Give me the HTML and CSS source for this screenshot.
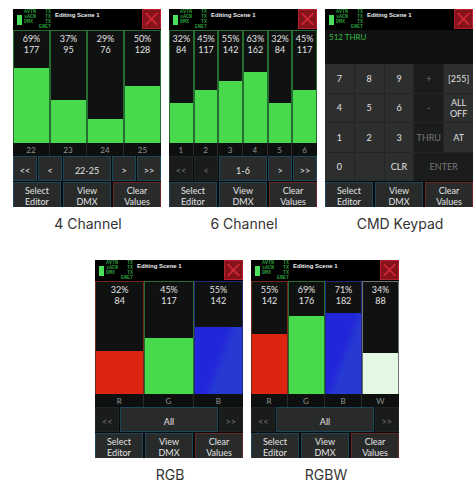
FILE: index.html
```
<!DOCTYPE html>
<html lang="en">
<head>
<meta charset="utf-8">
<title>Scene editors</title>
<link rel="stylesheet" href="styles.css">
</head>
<body>
<main class="gallery">
  <div class="row" id="row-one"></div>
  <div class="row row-offset" id="row-two"></div>
</main>
<template id="screen-header">
  <header class="top">
    <span class="battery"></span>
    <span class="status"><span>AVTN</span><span>TX</span><span>sACN</span><span>TX</span><span>DMX</span><span>TX</span><span class="enet">ENET</span></span>
    <span class="title">Editing Scene 1</span>
    <button class="close" aria-label="Close"><svg viewBox="0 0 19 19"><path d="M3 3L16 16M16 3L3 16"/></svg></button>
  </header>
</template>
<template id="screen-actions">
  <div class="actions">
    <button>Select<br>Editor</button>
    <button>View<br>DMX</button>
    <button class="clear">Clear<br>Values</button>
  </div>
</template>
<template id="keypad">
  <output class="command">512 THRU</output>
  <div class="keys">
    <button>7</button><button>8</button><button>9</button><button class="off">+</button><button>[255]</button>
    <button>4</button><button>5</button><button>6</button><button class="off">-</button><button>ALL<br>OFF</button>
    <button>1</button><button>2</button><button>3</button><button class="off">THRU</button><button>AT</button>
    <button>0</button><span class="blank"></span><button>CLR</button><button class="off enter">ENTER</button>
  </div>
</template>
<script src="app.js"></script>
</body>
</html>
```
FILE: styles.css
```
* { box-sizing: border-box; }
body {
  margin: 0;
  background: #fff;
  font-family: Lato, "Open Sans", sans-serif;
}
button {
  margin: 0;
  padding: 0;
  border: 0;
  border-radius: 0;
  font: inherit;
  color: inherit;
  background: none;
}
.gallery {
  display: flex;
  flex-direction: column;
  gap: 27px;
  padding: 9px 1px 0 13px;
}
.row { display: flex; gap: 8px; }
.row-offset { justify-content: center; padding-left: 8px; }
.figure {
  flex: 0 0 auto;
  width: calc((100vw - 30px) / 3);
  margin: 0;
}
.caption {
  margin-top: 8px;
  padding-left: 2px;
  font: 14px/18px Inter, sans-serif;
  color: #333;
  text-align: center;
}
.screen {
  display: flex;
  flex-direction: column;
  height: 198px;
  background: #080a0a;
  color: #e2e2e2;
  font-size: 9px;
  line-height: 11px;
}
.top {
  display: flex;
  gap: 2px;
  height: 21px;
  padding-left: 4px;
  background: #000;
}
.battery {
  width: 5px;
  height: 10px;
  margin-top: 6px;
  background: #4be05c;
}
.status {
  display: grid;
  grid-template-columns: 1fr auto;
  align-content: start;
  width: 27px;
  padding-top: 1px;
  font: bold 5px/5px "Liberation Mono", monospace;
  color: #2b9a3b;
}
.enet { grid-column: 1 / 3; text-align: right; }
.title {
  flex: 1;
  padding-left: 2px;
  font: bold 6px/12px "Liberation Sans", sans-serif;
  white-space: nowrap;
  color: #eee;
}
.close {
  width: 19px;
  height: 20px;
  border: 1px solid #b5202c;
  background: #86121b;
}
.close svg { display: block; width: 100%; height: 100%; }
.close path { stroke: #d02735; stroke-width: 2; fill: none; }

.channels {
  flex: 1;
  display: grid;
  grid-auto-flow: column;
  grid-auto-columns: 1fr;
}
.channel { display: flex; flex-direction: column; }
.meter {
  flex: 1;
  position: relative;
  display: flex;
  flex-direction: column;
  justify-content: flex-end;
  border: 1px solid #256e2f;
  border-bottom: 0;
  background: #101111;
}
.meter.red { border-color: #7b261b; }
.meter.blue { border-color: #22297f; }
.meter.white { border-color: #6f7477; }
.level { background: #48da4c; }
.red .level { background: #dc2412; }
.blue .level { background: linear-gradient(110deg, #2226da 45%, #263ad2 60%); }
.white .level { background: #e2f8e3; }
.reading {
  position: absolute;
  top: 2px;
  left: 0;
  right: 0;
  text-align: center;
}
.name {
  height: 13px;
  border-right: 1px solid #292b2b;
  font-size: 8px;
  line-height: 15px;
  text-align: center;
  color: #929494;
  background: #0e0f0f;
}
.channel:last-child .name { border-right: 0; }

.nav { display: grid; height: 25px; gap: 1px; }
.nav-pages { grid-template-columns: 1fr 1fr 2fr 1fr 1fr; }
.nav-all { grid-template-columns: 1fr 4fr 1fr; }
.nav button {
  border: 1px solid #1e465a;
  background: #292b2b;
  padding-top: 3px;
}
.nav button:disabled {
  border-color: #202424;
  background: #1a1b1b;
  color: #777;
}
.actions {
  display: grid;
  grid-template-columns: repeat(3, 1fr);
  gap: 2px;
  height: 26px;
  padding-top: 1px;
}
.actions button {
  overflow: hidden;
  border: 1px solid #1e465a;
  border-bottom: 0;
  background: #292b2b;
  padding-top: 2px;
}
.actions .clear { border-color: #6b2429; }

.command {
  height: 34px;
  padding: 2px 4px;
  background: #101111;
  color: #38bd48;
  font-size: 8px;
}
.keys {
  flex: 1;
  display: grid;
  grid-template-columns: repeat(5, 1fr);
  grid-template-rows: repeat(4, 1fr);
  gap: 1px;
  background: #232424;
}
.keys button, .blank { background: #2d2e2e; }
.keys .off { background: #1b1c1c; color: #777; }
.keys .enter { grid-column: span 2; }
```
FILE: app.js
```
const screens = [
  { row: "row-one", caption: "4 Channel", nav: ["<<", "<", "22-25", ">", ">>"], channels: [
    ["22", "69%", 177, 67], ["23", "37%", 95, 38], ["24", "29%", 76, 21], ["25", "50%", 128, 51]] },
  { row: "row-one", caption: "6 Channel", nav: ["<<", "<", "1-6", ">", ">>"], disabled: ["<<", "<"], channels: [
    ["1", "32%", 84, 36], ["2", "45%", 117, 47], ["3", "55%", 142, 55],
    ["4", "63%", 162, 63], ["5", "32%", 84, 36], ["6", "45%", 117, 47]] },
  { row: "row-one", caption: "CMD Keypad" },
  { row: "row-two", caption: "RGB", nav: ["<<", "All", ">>"], disabled: ["<<", ">>"], channels: [
    ["R", "32%", 84, 38, "red"], ["G", "45%", 117, 50], ["B", "55%", 142, 60, "blue"]] },
  { row: "row-two", caption: "RGBW", nav: ["<<", "All", ">>"], disabled: ["<<", ">>"], channels: [
    ["R", "55%", 142, 54, "red"], ["G", "69%", 176, 70], ["B", "71%", 182, 72, "blue"], ["W", "34%", 88, 37, "white"]] }
];

function element(tag, className, text) {
  const node = document.createElement(tag);
  node.className = className;
  if (text !== undefined) node.textContent = text;
  return node;
}

function copy(id) {
  return document.getElementById(id).content.cloneNode(true);
}

function channelColumn([name, percent, value, level, color]) {
  const column = element("div", "channel");
  const meter = element("div", "meter " + (color || "green"));
  const reading = element("div", "reading");
  reading.append(percent, document.createElement("br"), String(value));
  const bar = element("div", "level");
  bar.style.height = level + "%";
  meter.append(bar, reading);
  column.append(meter, element("div", "name", name));
  return column;
}

for (const data of screens) {
  const figure = element("figure", "figure");
  const screen = element("div", "screen");
  screen.append(copy("screen-header"));
  if (data.channels) {
    const channels = element("div", "channels");
    channels.append(...data.channels.map(channelColumn));
    const nav = element("nav", "nav " + (data.nav.length === 5 ? "nav-pages" : "nav-all"));
    for (const label of data.nav) {
      const button = element("button", "page", label);
      button.disabled = (data.disabled || []).includes(label);
      nav.append(button);
    }
    screen.append(channels, nav);
  } else {
    screen.append(copy("keypad"));
  }
  screen.append(copy("screen-actions"));
  figure.append(screen, element("figcaption", "caption", data.caption));
  document.getElementById(data.row).append(figure);
}
```
